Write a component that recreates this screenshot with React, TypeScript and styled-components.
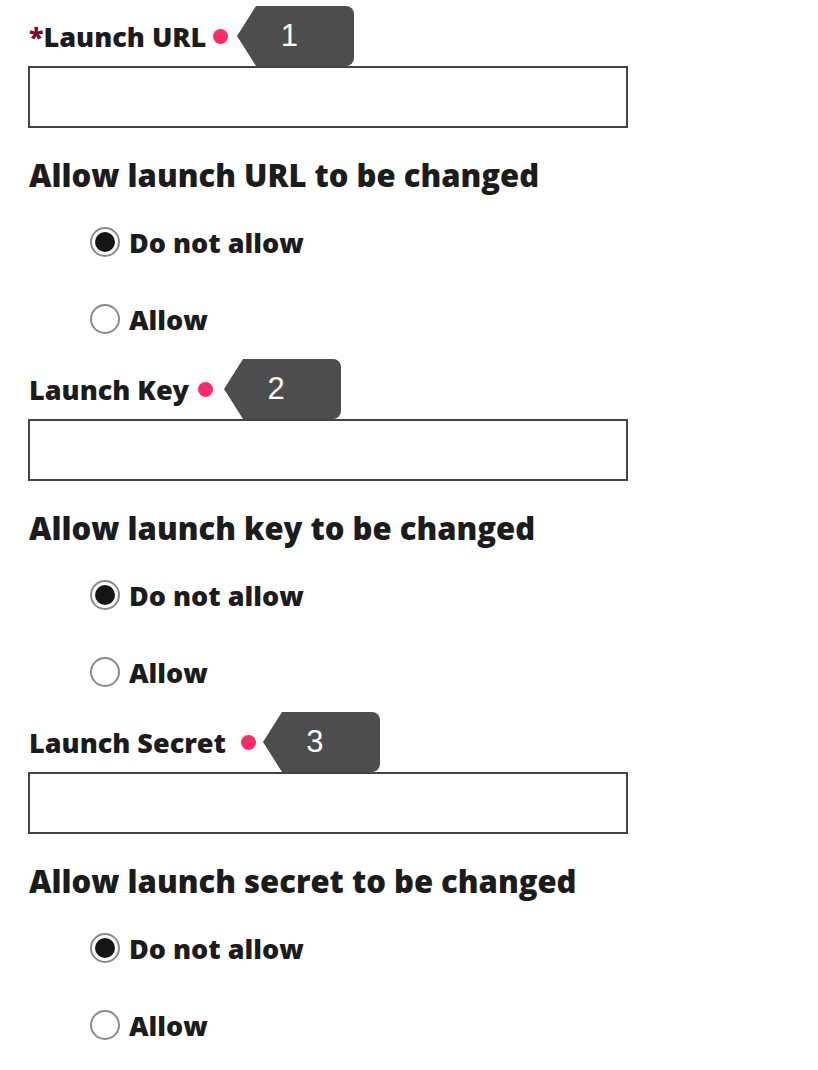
import React from 'react';
import styled, { createGlobalStyle } from 'styled-components';

const GlobalStyle = createGlobalStyle`
  html, body {
    margin: 0;
    padding: 0;
    background: #ffffff;
  }
  body {
    font-family: 'Open Sans', 'Liberation Sans', sans-serif;
    color: #1c1c1c;
  }
`;

const Page = styled.div`
  display: flex;
  flex-direction: column;
  padding: 6px 0 0 28px;
  width: 790px;
`;

const Section = styled.section`
  display: flex;
  flex-direction: column;
`;

const LabelRow = styled.div`
  display: flex;
  align-items: center;
  height: 60px;
`;

const Label = styled.label`
  font-size: 27px;
  font-weight: 800;
  line-height: 30px;
  padding: 1px 0 0 1px;
  white-space: pre;
`;

const Asterisk = styled.span`
  color: #7d0b2d;
`;

const Dot = styled.span<{ $gap: number }>`
  width: 15px;
  height: 15px;
  border-radius: 50%;
  background: #ff2a68;
  margin-left: ${({ $gap }) => $gap}px;
  flex-shrink: 0;
`;

const Badge = styled.div<{ $gap: number }>`
  position: relative;
  display: flex;
  align-items: center;
  justify-content: center;
  margin-left: ${({ $gap }) => $gap + 19}px;
  width: 98px;
  height: 60px;
  padding-right: 32px;
  box-sizing: border-box;
  background: #4d4d4d;
  border-radius: 0 8px 8px 0;
  color: #ffffff;
  font-family: 'Liberation Sans', Arial, sans-serif;
  font-size: 31px;
  font-weight: 400;

  &::before {
    content: '';
    position: absolute;
    left: -19px;
    top: 0;
    border-right: 19px solid #4d4d4d;
    border-top: 30px solid transparent;
    border-bottom: 30px solid transparent;
  }
`;

const Input = styled.input`
  width: 600px;
  height: 62px;
  box-sizing: border-box;
  border: 2px solid #444444;
  border-radius: 0;
  margin: 0;
  padding: 0 12px;
  font-size: 22px;
  font-family: inherit;
  outline: none;
`;

const Heading = styled.h3`
  margin: 29px 0 0 1px;
  font-size: 31px;
  font-weight: 800;
  line-height: 36px;
`;

const RadioList = styled.div`
  display: flex;
  flex-direction: column;
  gap: 37px;
  margin: 29px 0 20px 62px;
`;

const RadioRow = styled.label`
  display: flex;
  align-items: center;
  gap: 9px;
  height: 40px;
  font-size: 27px;
  font-weight: 800;
`;

const RadioCircle = styled.span<{ $checked: boolean }>`
  position: relative;
  width: 30px;
  height: 30px;
  box-sizing: border-box;
  border-radius: 50%;
  border: 2px solid #8a8a8a;
  background: #ffffff;
  flex-shrink: 0;

  &::after {
    content: '';
    display: ${({ $checked }) => ($checked ? 'block' : 'none')};
    position: absolute;
    inset: 3px;
    border-radius: 50%;
    background: #151515;
  }
`;

type Field = {
  label: string;
  required?: boolean;
  dotGap: number;
  badgeGap: number;
  step: number;
  heading: string;
};

const fields: Field[] = [
  { label: 'Launch URL', required: true, dotGap: 7, badgeGap: 9, step: 1, heading: 'Allow launch URL to be changed' },
  { label: 'Launch Key', dotGap: 9, badgeGap: 11, step: 2, heading: 'Allow launch key to be changed' },
  { label: 'Launch Secret', dotGap: 15, badgeGap: 7, step: 3, heading: 'Allow launch secret to be changed' },
];

const options = ['Do not allow', 'Allow'];

const App: React.FC = () => (
  <>
    <GlobalStyle />
    <Page>
      {fields.map((field) => (
        <Section key={field.step}>
          <LabelRow>
            <Label>
              {field.required && <Asterisk>*</Asterisk>}
              {field.label}
            </Label>
            <Dot $gap={field.dotGap} />
            <Badge $gap={field.badgeGap}>{field.step}</Badge>
          </LabelRow>
          <Input type='text' aria-label={field.label} />
          <Heading>{field.heading}</Heading>
          <RadioList>
            {options.map((option, i) => (
              <RadioRow key={option}>
                <RadioCircle $checked={i === 0} />
                {option}
              </RadioRow>
            ))}
          </RadioList>
        </Section>
      ))}
    </Page>
  </>
);

export default App;
